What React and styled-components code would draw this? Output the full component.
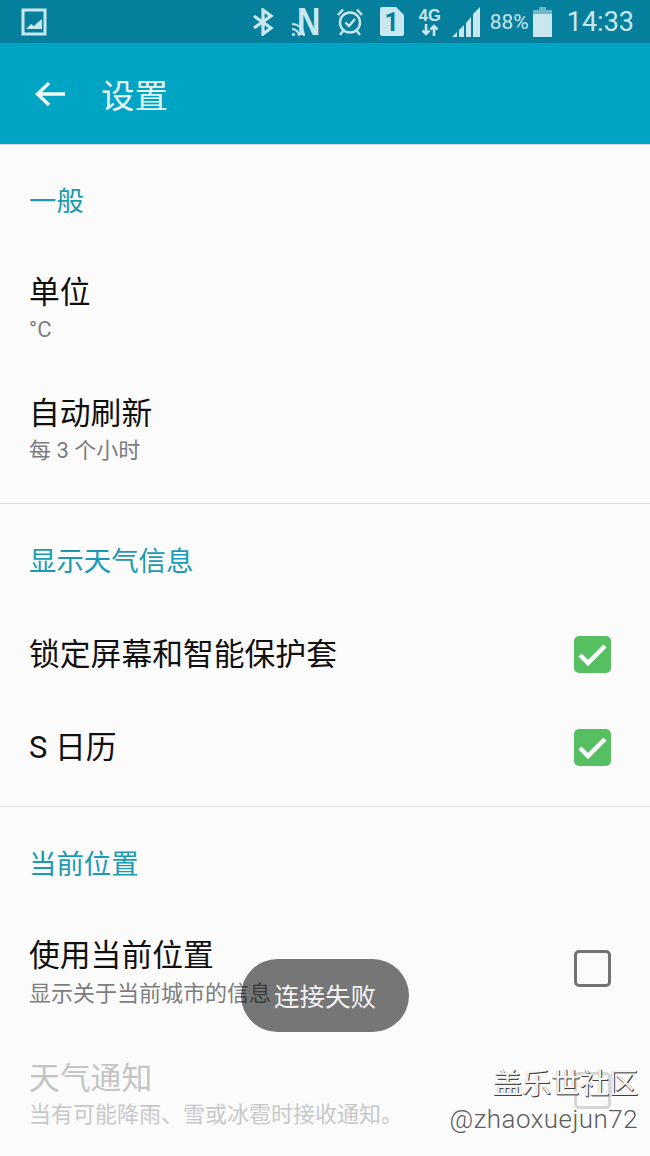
import React from "react";
import styled, { createGlobalStyle } from "styled-components";

const Global = createGlobalStyle`
  html, body { margin: 0; padding: 0; background: #fbfbfb; }
  body { font-family: Roboto, "Noto Sans CJK SC", sans-serif; }
`;

const Screen = styled.div`
  position: relative;
  width: 650px;
  height: 1156px;
  overflow: hidden;
  background: #fbfbfb;
`;

const StatusBar = styled.div`
  height: 43px;
  background: #067f9c;
  display: flex;
  align-items: center;
  padding: 0 16px 0 21px;
  color: #c9e7ee;
  box-sizing: border-box;
`;

const StatusIcons = styled.div`
  margin-left: auto;
  display: flex;
  align-items: center;
`;

const Cell = styled.span`
  display: flex;
  align-items: center;
  justify-content: center;
  margin-left: ${(p) => p.$gap || 0}px;
`;

const NfcWrap = styled.span`
  position: relative;
  display: block;
  width: 30px;
  height: 30px;
`;

const NfcLetter = styled.span`
  position: absolute;
  right: 0;
  top: -3px;
  font-family: "Liberation Sans", sans-serif;
  font-weight: 700;
  font-size: 38px;
  line-height: 36px;
  transform: scaleX(0.85);
  transform-origin: right center;
`;

const SimWrap = styled.span`
  position: relative;
  display: block;
  width: 24px;
  height: 29px;
`;

const SimDigit = styled.span`
  position: absolute;
  left: 0;
  right: 0;
  top: 2px;
  text-align: center;
  font-family: Roboto, sans-serif;
  font-weight: 700;
  font-size: 25px;
  line-height: 27px;
  color: #067f9c;
`;

const NetWrap = styled.span`
  display: flex;
  flex-direction: column;
  align-items: center;
  width: 24px;
`;

const NetLabel = styled.span`
  font-family: "Liberation Sans", sans-serif;
  font-weight: 700;
  font-size: 16.5px;
  line-height: 17px;
`;

const Percent = styled.span`
  font-size: 21px;
  line-height: 24px;
  margin-left: 10px;
`;

const Clock = styled.span`
  font-size: 27px;
  line-height: 30px;
  margin-left: 15px;
`;

const AppBar = styled.header`
  height: 101px;
  background: #00a5c3;
  display: flex;
  align-items: center;
  box-shadow: 0 1px 1px rgba(0, 0, 0, 0.12);
`;

const BackButton = styled.span`
  display: flex;
  margin-left: 34px;
`;

const Title = styled.h1`
  margin: 0 0 0 35px;
  font-weight: 400;
  font-size: 33.5px;
  line-height: 40px;
  color: #e6f6f9;
  font-family: "Noto Sans CJK SC", sans-serif;
`;

const Section = styled.section`
  padding: 28px 0 ${(p) => p.$pb || 0}px;
  border-bottom: ${(p) => (p.$last ? "none" : "1px solid #dcdcdc")};
`;

const SectionTitle = styled.h2`
  margin: 0 0 18px 29px;
  height: 58px;
  line-height: 55px;
  font-weight: 400;
  font-size: 27.4px;
  color: #1a9bb3;
  font-family: "Noto Sans CJK SC", sans-serif;
`;

const Row = styled.div`
  display: flex;
  align-items: center;
  height: ${(p) => p.$h}px;
  padding: 0 39px 0 29px;
  box-sizing: border-box;
`;

const RowText = styled.div`
  flex: 1;
  min-width: 0;
`;

const RowTitle = styled.div`
  font-size: 30.8px;
  line-height: 40px;
  color: ${(p) => (p.$off ? "#c4c4c4" : "#101010")};
  font-family: Roboto, "Noto Sans CJK SC", sans-serif;
`;

const RowSub = styled.div`
  font-size: 22px;
  line-height: 30px;
  margin-top: ${(p) => p.$mt}px;
  color: ${(p) => (p.$off ? "#c8c8c8" : "#7d7d7d")};
  font-family: Roboto, "Noto Sans CJK SC", sans-serif;
  white-space: nowrap;
`;

const Check = styled.span`
  display: flex;
  align-items: center;
  justify-content: center;
  width: 37px;
  height: 37px;
  border-radius: 5px;
  box-sizing: border-box;
  margin-bottom: ${(p) => (p.$lift ? 7 : 0)}px;
  background: ${(p) => (p.$on ? "#55bf62" : "transparent")};
  border: ${(p) => (p.$on ? "none" : `3.5px solid ${p.$off ? "#d6d6d6" : "#737373"}`)};
`;

const Toast = styled.div`
  position: absolute;
  left: 241px;
  top: 959px;
  width: 168px;
  height: 73px;
  padding-bottom: 3px;
  box-sizing: border-box;
  border-radius: 37px;
  background: rgba(0, 0, 0, 0.53);
  color: #f2f2f2;
  font-size: 25.5px;
  display: flex;
  align-items: center;
  justify-content: center;
  font-family: "Noto Sans CJK SC", sans-serif;
`;

const Watermark = styled.div`
  position: absolute;
  right: 12px;
  top: 1063px;
  text-align: right;
`;

const MarkName = styled.div`
  font-size: 29px;
  line-height: 36px;
  font-family: "Noto Sans CJK SC", sans-serif;
  font-weight: 400;
  color: #f4f4f4;
  text-shadow: 1px 1px 0 #3d3d3d, 0 1px 0 #555;
`;

const MarkUser = styled.div`
  font-size: 25.9px;
  line-height: 30px;
  margin-top: 5px;
  font-family: Roboto, sans-serif;
  font-weight: 300;
  color: #5c5c5c;
  letter-spacing: 0.5px;
`;

const CheckMark = () => (
  <svg width="37" height="37" viewBox="0 0 37 37">
    <path d="M6 19l8 8L31 10" fill="none" stroke="#fdfdfd" strokeWidth="4.5" />
  </svg>
);

const Toggle = ({ on, off, lift }) => (
  <Check $on={on} $off={off} $lift={lift}>
    {on && <CheckMark />}
  </Check>
);

export default function App() {
  return (
    <Screen>
      <Global />
      <StatusBar>
        <svg width="26" height="28" viewBox="0 0 26 28" fill="none">
          <rect x="2" y="2" width="22" height="24" stroke="currentColor" strokeWidth="3" />
          <path d="M5 21l5-5 3 2 3-3 5-4v10z" fill="currentColor" />
        </svg>
        <StatusIcons>
          <Cell>
            <svg width="22" height="28" viewBox="0 0 22 28" fill="none" stroke="currentColor" strokeWidth="3.2">
              <path d="M2 8l17 12-8 6V2l8 6L2 20" />
            </svg>
          </Cell>
          <Cell $gap={17}>
            <NfcWrap>
              <svg width="16" height="16" viewBox="0 0 16 16" fill="none" stroke="currentColor" strokeWidth="2" style={{ position: "absolute", left: 0, bottom: 0 }}>
                <path d="M1 3a12 12 0 0 1 12 12M1 8a7 7 0 0 1 7 7" />
                <circle cx="2.5" cy="13.5" r="1.6" fill="currentColor" stroke="none" />
              </svg>
              <NfcLetter>N</NfcLetter>
            </NfcWrap>
          </Cell>
          <Cell $gap={15}>
            <svg width="28" height="29" viewBox="0 0 28 29" fill="none" stroke="currentColor" strokeWidth="2.4">
              <circle cx="14" cy="15.5" r="10" />
              <path d="M9.5 15.5l3.5 3.5 6-7" />
              <path d="M2 8l5-5.5M26 8l-5-5.5M7 24l-3 4M21 24l3 4" />
            </svg>
          </Cell>
          <Cell $gap={16}>
            <SimWrap>
              <svg width="24" height="29" viewBox="0 0 24 29" style={{ display: "block" }}>
                <path d="M2 0h14l8 8v19a2 2 0 0 1-2 2H2a2 2 0 0 1-2-2V2a2 2 0 0 1 2-2z" fill="currentColor" />
              </svg>
              <SimDigit>1</SimDigit>
            </SimWrap>
          </Cell>
          <Cell $gap={14}>
            <NetWrap>
              <NetLabel>4G</NetLabel>
              <svg width="18" height="12" viewBox="0 0 18 12" fill="none" stroke="currentColor" strokeWidth="2.6">
                <path d="M5 0v10M1.5 6.5L5 10l3.500-3.500M13 12V2M9.500 5.500L13 2l3.500 3.500" />
              </svg>
            </NetWrap>
          </Cell>
          <Cell $gap={10}>
            <svg width="28" height="30" viewBox="0 0 28 30" fill="currentColor">
              <path d="M0 30l5-5v5zM7 23l5-5v12H7zM14 16l5-6v20h-5zM21 7l7-7v30h-7z" />
            </svg>
          </Cell>
          <Percent>88%</Percent>
          <Cell $gap={4}>
            <svg width="19" height="30" viewBox="0 0 19 30" fill="currentColor">
              <path d="M6 0h7v3H6z" opacity="0.55" />
              <path d="M0 3h19v5H0z" opacity="0.55" />
              <path d="M0 7h19v23H0z" />
            </svg>
          </Cell>
          <Clock>14:33</Clock>
        </StatusIcons>
      </StatusBar>
      <AppBar>
        <BackButton>
          <svg width="32" height="28" viewBox="0 0 32 28" fill="none" stroke="#f2fbfc" strokeWidth="3.4">
            <path d="M31 14H4M15 3L3.500 14 15 25" />
          </svg>
        </BackButton>
        <Title>设置</Title>
      </AppBar>

      <Section $pb={13}>
        <SectionTitle>一般</SectionTitle>
        <Row $h={121}>
          <RowText>
            <RowTitle>单位</RowTitle>
            <RowSub $mt={2}>°C</RowSub>
          </RowText>
        </Row>
        <Row $h={121}>
          <RowText>
            <RowTitle>自动刷新</RowTitle>
            <RowSub $mt={2}>每 3 个小时</RowSub>
          </RowText>
        </Row>
      </Section>

      <Section $pb={12}>
        <SectionTitle>显示天气信息</SectionTitle>
        <Row $h={93}>
          <RowText>
            <RowTitle>锁定屏幕和智能保护套</RowTitle>
          </RowText>
          <Toggle on />
        </Row>
        <Row $h={93}>
          <RowText>
            <RowTitle>S 日历</RowTitle>
          </RowText>
          <Toggle on />
        </Row>
      </Section>

      <Section $last>
        <SectionTitle>当前位置</SectionTitle>
        <Row $h={122}>
          <RowText>
            <RowTitle>使用当前位置</RowTitle>
            <RowSub $mt={3}>显示关于当前城市的信息</RowSub>
          </RowText>
          <Toggle lift />
        </Row>
        <Row $h={122}>
          <RowText>
            <RowTitle $off>天气通知</RowTitle>
            <RowSub $off $mt={1}>当有可能降雨、雪或冰雹时接收通知。</RowSub>
          </RowText>
          <Toggle off lift />
        </Row>
      </Section>

      <Toast>连接失败</Toast>
      <Watermark>
        <MarkName>盖乐世社区</MarkName>
        <MarkUser>@zhaoxuejun72</MarkUser>
      </Watermark>
    </Screen>
  );
}
